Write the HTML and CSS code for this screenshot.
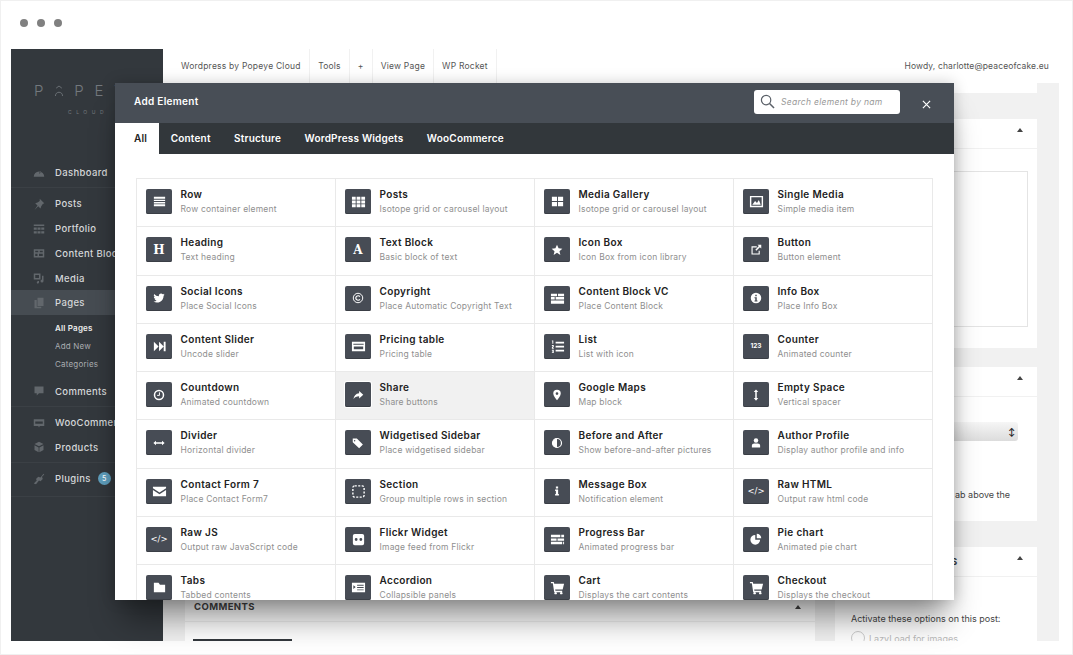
FILE: index.html
```html
<!DOCTYPE html>
<html lang="en">
<head>
    <meta charset="UTF-8">
    <meta name="viewport" content="width=device-width, initial-scale=1.0">
    <title>Add Element</title>
    <link rel="stylesheet" href="styles.css">
</head>
<body>
    <div class="window">
        <div class="dots"><span></span><span></span><span></span></div>

        <div class="screen">
            <div class="sidebar">
                <div class="logo">
                    <div class="logo-name">P<svg viewBox="0 0 14 16" width="10" height="12"><path d="M3 4l4-3 4 3M2 15c0-7 10-7 10 0" fill="none" stroke="#73787d" stroke-width="1.200"/></svg>PEYE</div>
                    <div class="logo-sub">CLOUD</div>
                </div>
                <ul class="menu">
                    <li class="menu-item sep"><svg viewBox="0 0 16 16"><path d="M1 13a7 7 0 1 1 14 0z M8 8l3-3-2 4z" fill-rule="evenodd"/></svg>Dashboard</li>
                    <li class="menu-item"><svg viewBox="0 0 16 16"><path d="M9 1l6 6-2 1-2 3-1 3-3-3-5 5 4-6-3-3 3-1 3-2z"/></svg>Posts</li>
                    <li class="menu-item"><svg viewBox="0 0 16 16"><path d="M1 2h14v2H1zM1 6h4v3H1zM6 6h4v3H6zM11 6h4v3h-4zM1 11h4v3H1zM6 11h4v3H6zM11 11h4v3h-4z"/></svg>Portfolio</li>
                    <li class="menu-item"><svg viewBox="0 0 16 16"><path d="M1 3h14v11H1zM3 5v2h4V5zM9 5v2h4V5zM3 9v3h3V9zM8 9v3h5V9z" fill-rule="evenodd"/></svg>Content Block</li>
                    <li class="menu-item"><svg viewBox="0 0 16 16"><path d="M1 2h9v8H1zM3 4v4h5V4zM12 5h2v7a2 2 0 1 1-2-2zM6 12h2v2a1.500 1.500 0 1 1-2-1.500z" fill-rule="evenodd"/></svg>Media</li>
                    <li class="menu-item current"><svg viewBox="0 0 16 16"><path d="M6 1h8v11H6zM2 4h3v9h6v2H2z"/></svg>Pages</li>
                    <li class="submenu">
                        <span class="sub-active">All Pages</span>
                        <span>Add New</span>
                        <span>Categories</span>
                    </li>
                    <li class="menu-item sep"><svg viewBox="0 0 16 16"><path d="M2 2h12v9H8l-3 3v-3H2z"/></svg>Comments</li>
                    <li class="menu-item"><svg viewBox="0 0 16 16"><path d="M1 3h14v9H9l-1 2-1-2H1zM3 6v3h10V6z" fill-rule="evenodd"/></svg>WooCommerce</li>
                    <li class="menu-item products"><svg viewBox="0 0 16 16"><path d="M8 1l6 3-6 3-6-3zM2 5.500l5.500 3V15L2 12zM14 5.500l-5.500 3V15l5.500-3z"/></svg>Products</li>
                    <li class="menu-item plugins"><svg viewBox="0 0 16 16"><path d="M14 1l1 1-3 3 1 3-3 3-2-1-4 5-3-1 4-4-1-2 3-3 3 1z"/></svg>Plugins<span class="badge">5</span></li>
                </ul>
            </div>

            <div class="main">
                <div class="topbar">
                    <span class="top-link">Wordpress by Popeye Cloud</span>
                    <span class="top-link">Tools</span>
                    <span class="top-link">+</span>
                    <span class="top-link">View Page</span>
                    <span class="top-link">WP Rocket</span>
                    <span class="howdy">Howdy, charlotte@peaceofcake.eu</span>
                </div>
                <div class="content">
                    <div class="col-left">
                        <div class="panel comments">
                            <div class="panel-head">COMMENTS<span class="caret"></span></div>
                            <div class="comment-tab"></div>
                        </div>
                    </div>
                    <div class="col-right">
                        <div class="panel panel-stub"></div>
                        <div class="panel panel-excerpt">
                            <div class="panel-head"><span class="caret"></span></div>
                            <div class="textbox"></div>
                        </div>
                        <div class="panel panel-attr">
                            <div class="panel-head"><span class="caret"></span></div>
                            <div class="select-box"><span class="select-arrows">&#8597;</span></div>
                            <p class="help-text">ab above the</p>
                        </div>
                        <div class="panel panel-opts">
                            <div class="panel-head">S<span class="caret"></span></div>
                            <p class="opts-text">Activate these options on this post:</p>
                            <div class="opts-check"><i></i>LazyLoad for images</div>
                        </div>
                    </div>
                </div>
            </div>
        </div>

        <div class="modal">
            <div class="modal-head">
                <span class="modal-title">Add Element</span>
                <div class="search">
                    <svg viewBox="0 0 16 16" width="15" height="15"><circle cx="6.500" cy="6.500" r="5" fill="none" stroke="#5a6068" stroke-width="1.300"/><path d="M10.200 10.200L15 15" stroke="#5a6068" stroke-width="1.600"/></svg>
                    <span class="search-text">Search element by nam</span>
                </div>
                <svg class="close" viewBox="0 0 10 10" width="9" height="9"><path d="M1 1l8 8M9 1l-8 8" stroke="#fff" stroke-width="1.300"/></svg>
            </div>
            <div class="tabs">
                <span class="tab active">All</span>
                <span class="tab">Content</span>
                <span class="tab">Structure</span>
                <span class="tab">WordPress Widgets</span>
                <span class="tab">WooCommerce</span>
            </div>
            <div class="modal-body">
                <div class="grid">
                    <div class="cell"><div class="ico ico-wide"><svg viewBox="0 0 16 16"><path d="M2 3h12v2H2zM2 6h12v1.500H2zM2 8.500h12V10H2zM2 11h12v2H2z"/></svg></div><div><h4>Row</h4><p>Row container element</p></div></div>
                    <div class="cell"><div class="ico ico-wide"><svg viewBox="0 0 16 16"><path d="M1 3h4v3H1zM6 3h4v3H6zM11 3h4v3h-4zM1 7h4v3H1zM6 7h4v3H6zM11 7h4v3h-4zM1 11h4v3H1zM6 11h4v3H6zM11 11h4v3h-4z"/></svg></div><div><h4>Posts</h4><p>Isotope grid or carousel layout</p></div></div>
                    <div class="cell"><div class="ico ico-wide"><svg viewBox="0 0 16 16"><path d="M2 3h5.500v4.500H2zM8.500 3H14v4.500H8.500zM2 8.500h5.500V13H2zM8.500 8.500H14V13H8.500z"/></svg></div><div><h4>Media Gallery</h4><p>Isotope grid or carousel layout</p></div></div>
                    <div class="cell"><div class="ico ico-wide"><svg viewBox="0 0 16 16"><path d="M1 2h14v12H1zM2.500 3.500v9h11v-9zM3.500 11.500l3-4 2 2 2-3 2 5z" fill-rule="evenodd"/></svg></div><div><h4>Single Media</h4><p>Simple media item</p></div></div>

                    <div class="cell"><div class="ico ico-letter">H</div><div><h4>Heading</h4><p>Text heading</p></div></div>
                    <div class="cell"><div class="ico ico-letter">A</div><div><h4>Text Block</h4><p>Basic block of text</p></div></div>
                    <div class="cell"><div class="ico"><svg viewBox="0 0 16 16"><path d="M8 1l2.100 4.700 5 .5-3.800 3.300 1.200 5L8 11.800l-4.500 2.700 1.200-5L.9 6.200l5-.5z"/></svg></div><div><h4>Icon Box</h4><p>Icon Box from icon library</p></div></div>
                    <div class="cell"><div class="ico"><svg viewBox="0 0 16 16"><path d="M3 3h6v1.500H3.500v8h8V9H13v5H2V3zM10 1h5v5l-1.800-1.800-4.700 4.700-1.400-1.400 4.700-4.700z"/></svg></div><div><h4>Button</h4><p>Button element</p></div></div>

                    <div class="cell"><div class="ico"><svg viewBox="0 0 24 24"><path d="M23 5c-.8.4-1.700.6-2.600.8.900-.6 1.700-1.400 2-2.500-.9.500-1.900.9-2.900 1.100A4.600 4.600 0 0 0 11.700 8.600 13 13 0 0 1 2.300 3.800a4.600 4.600 0 0 0 1.400 6.100c-.7 0-1.400-.2-2-.6 0 2.200 1.600 4.100 3.700 4.600-.7.2-1.400.2-2.100.1.600 1.800 2.300 3.100 4.300 3.200A9.200 9.200 0 0 1 1 19.100a13 13 0 0 0 7 2.100c8.500 0 13.100-7 13.100-13.100v-.6c.9-.6 1.700-1.500 1.900-2.500z"/></svg></div><div><h4>Social Icons</h4><p>Place Social Icons</p></div></div>
                    <div class="cell"><div class="ico"><svg viewBox="0 0 16 16"><circle cx="8" cy="8" r="6.300" fill="none" stroke="#fff" stroke-width="1.300"/><path d="M10.500 6.200a3 3 0 1 0 0 3.600" fill="none" stroke="#fff" stroke-width="1.600"/></svg></div><div><h4>Copyright</h4><p>Place Automatic Copyright Text</p></div></div>
                    <div class="cell"><div class="ico ico-wide"><svg viewBox="0 0 16 16"><path d="M1 3h6.500v2.500H1zM8.500 3H15v2.500H8.500zM1 6.500h4v2.500H1zM6 6.500h9v2.500H6zM1 10h14v3.500H1z"/></svg></div><div><h4>Content Block VC</h4><p>Place Content Block</p></div></div>
                    <div class="cell"><div class="ico"><svg viewBox="0 0 16 16"><path d="M8 1a7 7 0 1 1 0 14A7 7 0 0 1 8 1zM7 3.500v2h2v-2zM6 7v1.300h1v2.900H6v1.300h4v-1.300H9V7z" fill-rule="evenodd"/></svg></div><div><h4>Info Box</h4><p>Place Info Box</p></div></div>

                    <div class="cell"><div class="ico ico-wide"><svg viewBox="0 0 16 16"><path d="M2 3l5 5-5 5zM7.500 3l5 5-5 5zM12.500 3H14.500v10h-2z"/></svg></div><div><h4>Content Slider</h4><p>Uncode slider</p></div></div>
                    <div class="cell"><div class="ico ico-wide"><svg viewBox="0 0 16 16"><path d="M1 3h14v10H1zM2.500 5v1h11V5zM3 8v3h10V8z" fill-rule="evenodd"/></svg></div><div><h4>Pricing table</h4><p>Pricing table</p></div></div>
                    <div class="cell"><div class="ico ico-wide"><svg viewBox="0 0 16 16"><path d="M2 1.500h1.500V5H2.500V2.500H2zM2 6.500h2v2l-1 1h1v1H2v-1.800l1-1V7.500H2zM2 11.500h2V15H2v-1h1v-.5h-.5v-.8H3V12.500H2zM6 3h9v1.800H6zM6 7.200h9V9H6zM6 11.400h9v1.800H6z"/></svg></div><div><h4>List</h4><p>List with icon</p></div></div>
                    <div class="cell"><div class="ico ico-small">123</div><div><h4>Counter</h4><p>Animated counter</p></div></div>

                    <div class="cell"><div class="ico"><svg viewBox="0 0 16 16"><circle cx="8" cy="8" r="6" fill="none" stroke="#fff" stroke-width="2"/><path d="M8.600 4.500v4H5.500" fill="none" stroke="#fff" stroke-width="1.300"/></svg></div><div><h4>Countdown</h4><p>Animated countdown</p></div></div>
                    <div class="cell hovered"><div class="ico"><svg viewBox="0 0 16 16"><path d="M9.500 2.500L15 7.500l-5.500 5V9.500C6 9.500 3.500 10.500 2 13.500 2.300 9 5 6 9.500 5.500z"/></svg></div><div><h4>Share</h4><p>Share buttons</p></div></div>
                    <div class="cell"><div class="ico"><svg viewBox="0 0 16 16"><path d="M8 1a5 5 0 0 1 5 5c0 3-3 6.500-5 9-2-2.500-5-6-5-9a5 5 0 0 1 5-5zM8 4.300a1.800 1.800 0 1 0 0 3.600 1.800 1.800 0 0 0 0-3.600z" fill-rule="evenodd"/></svg></div><div><h4>Google Maps</h4><p>Map block</p></div></div>
                    <div class="cell"><div class="ico"><svg viewBox="0 0 16 16"><path d="M8 .5L11 4H9v8h2l-3 3.500L5 12h2V4H5z"/></svg></div><div><h4>Empty Space</h4><p>Vertical spacer</p></div></div>

                    <div class="cell"><div class="ico"><svg viewBox="0 0 16 16"><path d="M.5 8L4 5v2h8V5l3.500 3-3.500 3V9H4v2z"/></svg></div><div><h4>Divider</h4><p>Horizontal divider</p></div></div>
                    <div class="cell"><div class="ico"><svg viewBox="0 0 16 16"><path d="M1 2h5.500l8 8-5 5-8.500-8zM3.500 4a1 1 0 1 0 0 2 1 1 0 0 0 0-2z" fill-rule="evenodd"/></svg></div><div><h4>Widgetised Sidebar</h4><p>Place widgetised sidebar</p></div></div>
                    <div class="cell"><div class="ico"><svg viewBox="0 0 16 16"><circle cx="8" cy="8" r="6" fill="none" stroke="#fff" stroke-width="1.600"/><path d="M8 2a6 6 0 0 1 0 12z" transform="matrix(-1 0 0 1 16 0)"/></svg></div><div><h4>Before and After</h4><p>Show before-and-after pictures</p></div></div>
                    <div class="cell"><div class="ico"><svg viewBox="0 0 16 16"><circle cx="8" cy="4.500" r="3"/><path d="M2.500 14v-2.500c0-2 1.500-3 3-3h5c1.500 0 3 1 3 3V14z"/></svg></div><div><h4>Author Profile</h4><p>Display author profile and info</p></div></div>

                    <div class="cell"><div class="ico ico-wide"><svg viewBox="0 0 16 16"><path d="M1 3h14v1.500L8 9 1 4.500zM1 6.500L8 11l7-4.500V13H1z"/></svg></div><div><h4>Contact Form 7</h4><p>Place Contact Form7</p></div></div>
                    <div class="cell"><div class="ico ico-wide"><svg viewBox="0 0 16 16"><rect x="2" y="2" width="12" height="12" rx="2" fill="none" stroke="#fff" stroke-width="1.500" stroke-dasharray="2.200 1.500"/></svg></div><div><h4>Section</h4><p>Group multiple rows in section</p></div></div>
                    <div class="cell"><div class="ico"><svg viewBox="0 0 16 16"><path d="M6.500 2h3v2.500h-3zM5.500 6h4v6h1v2h-5v-2h1V8h-1z"/></svg></div><div><h4>Message Box</h4><p>Notification element</p></div></div>
                    <div class="cell"><div class="ico ico-code">&lt;/&gt;</div><div><h4>Raw HTML</h4><p>Output raw html code</p></div></div>

                    <div class="cell"><div class="ico ico-code">&lt;/&gt;</div><div><h4>Raw JS</h4><p>Output raw JavaScript code</p></div></div>
                    <div class="cell"><div class="ico ico-wide"><svg viewBox="0 0 16 16"><path d="M4 2h8a2 2 0 0 1 2 2v8a2 2 0 0 1-2 2H4a2 2 0 0 1-2-2V4a2 2 0 0 1 2-2zM5.500 6.500a1.500 1.500 0 1 0 0 3 1.500 1.500 0 0 0 0-3zM10.500 6.500a1.500 1.500 0 1 0 0 3 1.500 1.500 0 0 0 0-3z" fill-rule="evenodd"/></svg></div><div><h4>Flickr Widget</h4><p>Image feed from Flickr</p></div></div>
                    <div class="cell"><div class="ico ico-wide"><svg viewBox="0 0 16 16"><path d="M1 3h10v2.500H1zM12 3h3v2.500h-3zM1 6.800h6v2.500H1zM8 6.800h7v2.500H8zM1 10.500h12V13H1zM14 10.500h1V13h-1z"/></svg></div><div><h4>Progress Bar</h4><p>Animated progress bar</p></div></div>
                    <div class="cell"><div class="ico"><svg viewBox="0 0 16 16"><path d="M7 2.500V9h6.500A6.500 6.500 0 1 1 7 2.500zM9 1a6 6 0 0 1 6 6H9z"/></svg></div><div><h4>Pie chart</h4><p>Animated pie chart</p></div></div>

                    <div class="cell"><div class="ico ico-wide"><svg viewBox="0 0 16 16"><path d="M2 3h5l1.500 2H14v8H2z"/></svg></div><div><h4>Tabs</h4><p>Tabbed contents</p></div></div>
                    <div class="cell"><div class="ico ico-wide"><svg viewBox="0 0 16 16"><path d="M1 3h14v10H1zM2.500 5.500l2.500 2-2.500 2zM6.500 5v1h7V5zM6.500 7.500v1h7v-1zM6.500 10v1h7v-1z" fill-rule="evenodd"/></svg></div><div><h4>Accordion</h4><p>Collapsible panels</p></div></div>
                    <div class="cell"><div class="ico ico-wide"><svg viewBox="0 0 16 16"><path d="M1 2h3l.5 2H15l-1.500 6H5.500l.3 1.500H13V13H4.500L3 3.500H1z"/><circle cx="6" cy="14" r="1.300"/><circle cx="12" cy="14" r="1.300"/></svg></div><div><h4>Cart</h4><p>Displays the cart contents</p></div></div>
                    <div class="cell"><div class="ico ico-wide"><svg viewBox="0 0 16 16"><path d="M1 2h3l.5 2H15l-1.500 6H5.500l.3 1.500H13V13H4.500L3 3.500H1z"/><circle cx="6" cy="14" r="1.300"/><circle cx="12" cy="14" r="1.300"/></svg></div><div><h4>Checkout</h4><p>Displays the checkout</p></div></div>
                </div>
            </div>
        </div>
    </div>
</body>
</html>
```

FILE: styles.css
```css
:root {
    --side-color: #33383d;
    --side-active: #464c52;
    --head-color: #484e56;
    --tabs-color: #32373b;
    --ico-color: #474c55;
    --line-color: #e9e9e9;
    --text-color: #222;
    --muted-color: #8f8f8f;
}

* {
    margin: 0;
    padding: 0;
    box-sizing: border-box;
    font-family: 'Inter', 'Liberation Sans', sans-serif;
}

body {
    background-color: #fff;
    overflow: hidden;
}

ul {
    list-style-type: none;
}

.window {
    position: relative;
    width: 1073px;
    height: 655px;
    border: 1px solid #f0f0f0;
    overflow: hidden;
}

.dots {
    display: flex;
    gap: 9px;
    height: 48px;
    padding: 18px 0 0 19px;
}

.dots span {
    width: 8px;
    height: 8px;
    border-radius: 50%;
    background-color: #808080;
}

.screen {
    display: flex;
    width: 1048px;
    height: 592px;
    margin-left: 10px;
    overflow: hidden;
}

/* sidebar */
.sidebar {
    width: 152px;
    flex-shrink: 0;
    background-color: var(--side-color);
    color: #d5d7d9;
    overflow: hidden;
}

.logo {
    height: 109px;
    padding: 32px 0 0 23px;
    color: #73787d;
    white-space: nowrap;
}

.logo-name {
    display: flex;
    align-items: center;
    width: 150px;
    font-size: 15px;
    font-weight: 300;
    letter-spacing: 10.800px;
}

.logo-name svg {
    margin-right: 10px;
}

.logo-sub {
    margin: 9px 0 0 34px;
    font-size: 5px;
    letter-spacing: 4.500px;
}

.menu-item {
    display: flex;
    align-items: center;
    height: 24.700px;
    padding-left: 22px;
    font-size: 9.500px;
    font-weight: 500;
    letter-spacing: 0.350px;
    white-space: nowrap;
}

.menu-item svg {
    width: 12px;
    height: 12px;
    margin-right: 10px;
    fill: #62676c;
}

.menu-item.sep {
    height: 30px;
    margin-bottom: 3.600px;
    border-bottom: 1px solid #3b4045;
}

.menu-item.current {
    background-color: var(--side-active);
}

.submenu {
    display: flex;
    flex-direction: column;
    gap: 8px;
    padding: 7.500px 0 7.500px 44px;
    font-size: 8px;
    line-height: 10.300px;
    color: #a9acb0;
    letter-spacing: 0.200px;
}

.sub-active {
    color: #eee;
    font-weight: 600;
}

.menu-item.products {
    height: 28px;
    padding-bottom: 3px;
    border-bottom: 1px solid #3b4045;
}

.menu-item.plugins {
    height: 34px;
    padding-bottom: 2px;
    border-bottom: 1px solid #3b4045;
}

.badge {
    width: 13px;
    height: 13px;
    margin-left: 7px;
    border-radius: 50%;
    background-color: #5f9fbe;
    color: #fff;
    font-size: 7px;
    line-height: 13px;
    text-align: center;
    letter-spacing: 0;
}

/* page behind the modal */
.main {
    flex: 1;
    display: flex;
    flex-direction: column;
    background-color: #f1f1f1;
    min-width: 0;
}

.topbar {
    display: flex;
    align-items: center;
    height: 34px;
    flex-shrink: 0;
    padding-right: 10px;
    background-color: #fff;
    color: #555;
    font-size: 8.500px;
    letter-spacing: 0.220px;
}

.top-link {
    display: flex;
    align-items: center;
    height: 100%;
    padding: 0 8px;
    border-right: 1px solid #f1f1f1;
}

.top-link:first-child {
    padding: 0 8.500px 0 18px;
}

.howdy {
    margin-left: auto;
    letter-spacing: 0.130px;
}

.content {
    flex: 1;
    display: flex;
    gap: 20px;
    padding: 0 22px;
    min-height: 0;
    overflow: hidden;
}

.col-left {
    flex: 1;
    display: flex;
    flex-direction: column;
    justify-content: flex-end;
}

.col-right {
    width: 202px;
    flex-shrink: 0;
}

.panel {
    background-color: #fff;
    color: #444;
    font-size: 9px;
}

.panel-head {
    position: relative;
    height: 30px;
    padding: 0 0 0 9px;
    border-bottom: 1px solid #f1f1f1;
    font-size: 9.500px;
    font-weight: 700;
    line-height: 22px;
    letter-spacing: 0.400px;
}

.caret {
    position: absolute;
    right: 14px;
    top: 9px;
    border-left: 3px solid transparent;
    border-right: 3px solid transparent;
    border-bottom: 4px solid #444;
}

.comments {
    height: 45px;
}

.comments .panel-head {
    height: 26px;
}

.comment-tab {
    width: 99px;
    height: 2px;
    margin: 17px 0 0 8px;
    background-color: #33383d;
}

.panel-stub {
    height: 10px;
    margin-bottom: 26px;
}

.panel-excerpt {
    height: 229px;
    margin-bottom: 19px;
}

.textbox {
    height: 156px;
    margin: 22px 9px 0 20px;
    border: 1px solid #e4e4e4;
}

.panel-attr {
    height: 154px;
    margin-bottom: 26px;
}

.select-box {
    display: flex;
    align-items: center;
    justify-content: flex-end;
    height: 19px;
    margin: 25px 19px 0 20px;
    padding-right: 3px;
    border-radius: 3px;
    background: linear-gradient(#f6f6f6, #dcdcdc);
    color: #222;
    font-size: 8px;
    font-weight: 700;
}

.help-text {
    margin-top: 48px;
    padding-left: 120px;
    white-space: nowrap;
}

.panel-opts {
    height: 94px;
}

.panel-opts .panel-head {
    padding-left: 116px;
    line-height: 30px;
}

.opts-text {
    margin: 36px 0 0 16px;
    white-space: nowrap;
}

.opts-check {
    display: flex;
    align-items: center;
    gap: 4px;
    margin: 7px 0 0 16px;
    color: #bbb;
    white-space: nowrap;
}

.opts-check i {
    width: 14px;
    height: 14px;
    border: 1px solid #ccc;
    border-radius: 50%;
}

/* modal */
.modal {
    position: absolute;
    left: 114px;
    top: 82px;
    width: 839px;
    height: 517px;
    display: flex;
    flex-direction: column;
    background-color: #fff;
    box-shadow: 0 26px 30px -8px rgba(0,0,0,0.42), 0 0 14px rgba(0,0,0,0.2);
}

.modal-head {
    display: flex;
    align-items: center;
    height: 40px;
    flex-shrink: 0;
    padding: 0 22px 0 19px;
    background-color: var(--head-color);
    color: #fff;
}

.modal-title {
    margin-top: -4px;
    font-size: 10px;
    font-weight: 600;
    letter-spacing: 0.300px;
}

.search {
    display: flex;
    align-items: center;
    gap: 6px;
    width: 146px;
    height: 24px;
    margin: -3px 0 0 auto;
    padding-left: 6px;
    border-radius: 3px;
    background-color: #fff;
    overflow: hidden;
    white-space: nowrap;
}

.search-text {
    color: #999;
    font-size: 8.500px;
    font-style: italic;
    letter-spacing: 0.300px;
}

.close {
    margin: 2px 1px 0 22px;
}

.tabs {
    display: flex;
    height: 31px;
    flex-shrink: 0;
    background-color: var(--tabs-color);
}

.tab {
    padding: 0 11.700px;
    color: #fff;
    font-size: 10px;
    font-weight: 600;
    line-height: 31px;
    letter-spacing: 0.200px;
}

.tab.active {
    width: 44px;
    margin-right: 0;
    padding: 0 0 0 19px;
    background-color: #fff;
    color: var(--text-color);
}

.modal-body {
    flex: 1;
    min-height: 0;
    padding: 24px 21px 0;
    overflow: hidden;
}

.grid {
    display: grid;
    grid-template-columns: repeat(4, 1fr);
    grid-auto-rows: 48.250px;
    border-top: 1px solid var(--line-color);
    border-left: 1px solid var(--line-color);
}

.cell {
    display: flex;
    gap: 8.500px;
    padding: 10px 0 0 9px;
    border-right: 1px solid var(--line-color);
    border-bottom: 1px solid var(--line-color);
    white-space: nowrap;
}

.cell.hovered {
    background-color: #f1f1f1;
}

.ico {
    display: flex;
    align-items: center;
    justify-content: center;
    width: 26px;
    height: 25px;
    flex-shrink: 0;
    border-radius: 2px;
    background-color: var(--ico-color);
    color: #fff;
    box-shadow: inset 0 -1px 0 #3a3e45;
}

.hovered .ico {
    box-shadow: inset 0 -1px 0 #3a3e45, 0 0 0 1px #fff;
}

.ico svg {
    width: 12px;
    height: 12px;
    fill: #fff;
}

.ico-wide svg {
    width: 15px;
    height: 15px;
}

.ico-letter {
    font-family: 'DejaVu Serif', 'Liberation Serif', serif;
    font-size: 12px;
    font-weight: 700;
}

.ico-small {
    font-size: 6.500px;
    font-weight: 700;
}

.ico-code {
    font-family: 'DejaVu Sans', sans-serif;
    font-size: 8.500px;
}

.cell h4 {
    margin-top: -1px;
    color: var(--text-color);
    font-size: 10px;
    font-weight: 600;
    line-height: 13px;
    letter-spacing: 0.350px;
}

.cell p {
    margin-top: 3px;
    color: var(--muted-color);
    font-size: 8.500px;
    line-height: 11px;
    letter-spacing: 0.200px;
}
```
